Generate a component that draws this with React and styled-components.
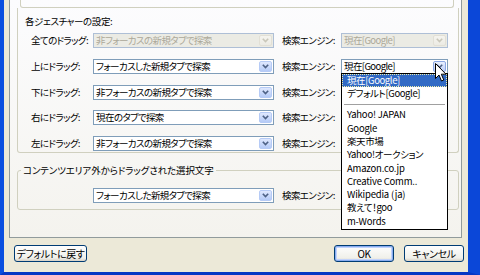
import React from "react";
import styled, { createGlobalStyle } from "styled-components";

const GlobalStyle = createGlobalStyle`
  html, body { margin: 0; padding: 0; }
  body {
    width: 480px;
    height: 275px;
    overflow: hidden;
    font-family: "Noto Sans CJK JP", "Liberation Sans", sans-serif;
    font-size: 9.5px;
    letter-spacing: -0.6px;
    font-feature-settings: "palt";
    line-height: 13px;
    color: #000;
  }
`;

const Window = styled.div`
  width: 480px;
  height: 275px;
  box-sizing: border-box;
  background: #ece9d8;
  border-left: 4px solid #0a4fe0;
  border-right: 12px solid #0b47d8;
  border-bottom: 3px solid #0637c4;
  padding: 0 6px 0 5px;
  display: flex;
  flex-direction: column;
`;

const TabPanel = styled.div`
  height: 238px;
  box-sizing: border-box;
  border: 1px solid #919b9c;
  border-top: none;
  background: linear-gradient(#fcfcfe, #f4f3ee);
  padding: 0 2px 0 7px;
  display: flex;
  flex-direction: column;
`;

const PrevGroup = styled.div`
  height: 8px;
  box-sizing: border-box;
  margin: 0 5px 0 3px;
  border: 1px solid #d0d0bf;
  border-top: none;
  border-radius: 0 0 3px 3px;
`;

const GestureGroup = styled.div`
  height: 145px;
  box-sizing: border-box;
  border: 1px solid #d0d0bf;
  border-top: none;
  border-radius: 0 0 3px 3px;
  padding: 6px 0 0 7px;
`;

const SectionTitle = styled.div`
  height: 13px;
  margin-top: 0.5px;
  letter-spacing: -0.4px;
`;

const Rows = styled.div`
  display: grid;
  grid-template-columns: 62px 181px 67px 107px;
  grid-auto-rows: 15px;
  row-gap: 10.75px;
  align-items: center;
  margin: ${(p) => p.$top || 0}px 0 0 ${(p) => p.$left || 6}px;
`;

const Label = styled.span`
  white-space: nowrap;
  padding-left: ${(p) => (p.$gap ? 8 : 0)}px;
`;

const SelectWrap = styled.div`
  position: relative;
  height: 15px;
`;

const Select = styled.div`
  height: 15px;
  box-sizing: border-box;
  border: 1px solid ${(p) => (p.$disabled ? "#aebfd6" : "#7f9db9")};
  background: ${(p) => (p.$disabled ? "#ebebe4" : "#fff")};
  color: ${(p) => (p.$disabled ? "#aca899" : "#000")};
  display: flex;
  align-items: center;
  padding-left: 2px;
`;

const SelectText = styled.span`
  flex: 1;
  white-space: nowrap;
  overflow: hidden;
`;

const DropButton = styled.span`
  width: 13px;
  height: 11px;
  margin-right: 1px;
  box-sizing: border-box;
  border-radius: 2px;
  border: 1px solid
    ${(p) => (p.$disabled ? "#e2e0d6" : p.$hot ? "#8aa7e4" : "#b6cbf6")};
  background: ${(p) =>
    p.$disabled
      ? "linear-gradient(#f5f4ef, #ecebe4)"
      : p.$hot
      ? "linear-gradient(#e8effe, #bcd0fb)"
      : "linear-gradient(#dfe8fe, #b5cbf7)"};
  display: flex;
  align-items: center;
  justify-content: center;
`;

const Chevron = ({ color }) => (
  <svg width="7" height="5" viewBox="0 0 7 5">
    <path d="M0.8 0.8 L3.5 3.6 L6.2 0.8" fill="none" stroke={color} strokeWidth="1.6" />
  </svg>
);

const Combo = ({ text, disabled, hot, children }) => (
  <SelectWrap>
    <Select $disabled={disabled}>
      <SelectText>{text}</SelectText>
      <DropButton $disabled={disabled} $hot={hot}>
        <Chevron color={disabled ? "#c9c7ba" : "#4d6185"} />
      </DropButton>
    </Select>
    {children}
  </SelectWrap>
);

const GroupBox = styled.fieldset`
  margin: 10.5px 0 0 0;
  padding: 0 0 6px 0;
  min-width: 0;
  border: 1px solid #d0d0bf;
  border-radius: 3px;
`;

const Legend = styled.legend`
  margin-left: 3px;
  padding: 0 2px;
  line-height: 13px;
  letter-spacing: -0.1px;
`;

const ListBox = styled.div`
  position: absolute;
  top: 14px;
  left: 0;
  width: 107px;
  box-sizing: border-box;
  border: 1px solid #000;
  background: #fff;
  z-index: 2;
  padding-bottom: 1px;
`;

const Option = styled.div`
  height: 13.3px;
  line-height: 13px;
  box-sizing: border-box;
  padding-left: 5px;
  white-space: nowrap;
  letter-spacing: ${(p) => (p.$latin ? "-0.2px" : "-0.4px")};
  background: ${(p) => (p.$selected ? "#316ac5" : "transparent")};
  color: ${(p) => (p.$selected ? "#fff" : "#000")};
  outline: ${(p) => (p.$selected ? "1px dotted #f2eea8" : "none")};
  outline-offset: -1px;
`;

const Separator = styled.div`
  height: 8px;
  display: flex;
  align-items: center;
  padding: 0 2px;

  &::after {
    content: "";
    flex: 1;
    height: 1px;
    background: #a0a0a0;
  }
`;

const Cursor = styled.svg`
  position: absolute;
  left: 94px;
  top: 4px;
  z-index: 3;
`;

const ButtonBar = styled.div`
  display: flex;
  align-items: center;
  padding: 7px 0 0 5px;
  margin-right: -2px;
  gap: 10px;
`;

const Button = styled.button`
  height: 17px;
  width: ${(p) => p.$w || 60}px;
  box-sizing: border-box;
  padding: 0;
  font: inherit;
  font-size: 10px;
  letter-spacing: -0.4px;
  line-height: 13px;
  white-space: nowrap;
  color: #000;
  border: 1px solid #003c74;
  border-radius: 3px;
  background: linear-gradient(#fefefe, #f0f0ea 80%, #d6d0c5);
  box-shadow: ${(p) =>
    p.$default ? "inset 0 0 0 1px #89adf0, inset 0 0 0 2px #c2d3fb" : "none"};
  margin-left: ${(p) => (p.$push ? "auto" : "0")};
`;

const engines = [
  { name: "Yahoo! JAPAN", latin: true },
  { name: "Google", latin: true },
  { name: "楽天市場" },
  { name: "Yahoo!オークション" },
  { name: "Amazon.co.jp", latin: true },
  { name: "Creative Comm..", latin: true },
  { name: "Wikipedia (ja)", latin: true },
  { name: "教えて！goo" },
  { name: "m-Words", latin: true },
];

const rows = [
  { label: "上にドラッグ:", action: "フォーカスした新規タブで探索" },
  { label: "下にドラッグ:", action: "非フォーカスの新規タブで探索" },
  { label: "右にドラッグ:", action: "現在のタブで探索" },
  { label: "左にドラッグ:", action: "非フォーカスの新規タブで探索" },
];

export default function App() {
  return (
    <>
      <GlobalStyle />
      <Window>
        <TabPanel>
          <PrevGroup />
          <GestureGroup>
            <SectionTitle>各ジェスチャーの設定:</SectionTitle>
            <Rows $top={5.5}>
              <Label>全てのドラッグ:</Label>
              <Combo text="非フォーカスの新規タブで探索" disabled />
              <Label $gap>検索エンジン:</Label>
              <Combo text="現在[Google]" disabled />

              {rows.map((r, i) => (
                <React.Fragment key={r.label}>
                  <Label>{r.label}</Label>
                  <Combo text={r.action} />
                  <Label $gap>検索エンジン:</Label>
                  {i === 0 ? (
                    <Combo text="現在[Google]" hot>
                      <ListBox>
                        <Option $selected>現在[Google]</Option>
                        <Option>デフォルト[Google]</Option>
                        <Separator />
                        {engines.map((e) => (
                          <Option key={e.name} $latin={e.latin}>
                            {e.name}
                          </Option>
                        ))}
                      </ListBox>
                      <Cursor width="12" height="19" viewBox="0 0 12 19">
                        <path
                          d="M0.5 0.5 L0.5 15.5 L4 12 L6.5 18 L8.8 17 L6.3 11.2 L11 11.2 Z"
                          fill="#fff"
                          stroke="#000"
                          strokeWidth="1"
                          strokeLinejoin="round"
                        />
                      </Cursor>
                    </Combo>
                  ) : (
                    <Combo text="現在[Google]" />
                  )}
                </React.Fragment>
              ))}
            </Rows>
          </GestureGroup>

          <GroupBox>
            <Legend>コンテンツエリア外からドラッグされた選択文字</Legend>
            <Rows $top={11.5} $left={13}>
              <span />
              <Combo text="フォーカスした新規タブで探索" />
              <Label $gap>検索エンジン:</Label>
              <Combo text="現在[Google]" />
            </Rows>
          </GroupBox>
        </TabPanel>

        <ButtonBar>
          <Button $w={73}>デフォルトに戻す</Button>
          <Button $push $default>OK</Button>
          <Button>キャンセル</Button>
        </ButtonBar>
      </Window>
    </>
  );
}
